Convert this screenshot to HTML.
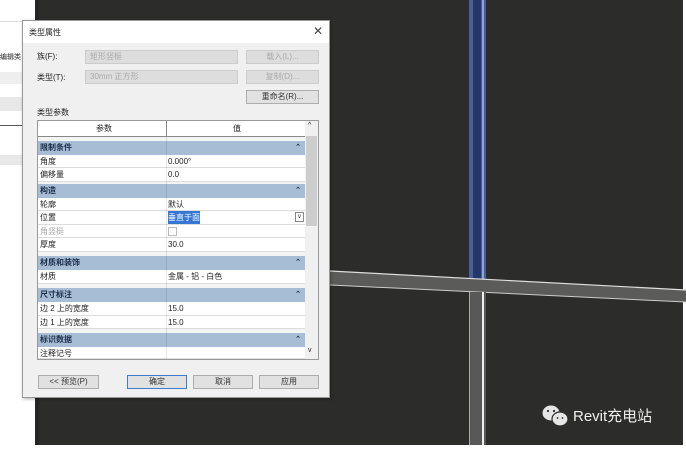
<!DOCTYPE html>
<html><head><meta charset="utf-8"><style>
*{margin:0;padding:0;box-sizing:border-box}
body{width:686px;height:449px;overflow:hidden;background:#fff;position:relative;font-family:"Liberation Sans","Noto Sans CJK SC",sans-serif;font-size:8px;color:#222}
.a{position:absolute}
.row{position:absolute;left:38px;width:267px;height:13.5px;background:#fff;border-bottom:1px solid #ddd;line-height:13px}
.row span{position:absolute;left:2px}
.row b{position:absolute;left:130px;font-weight:normal}
.sec{position:absolute;left:38px;width:267px;height:13.5px;background:#a7bdd6;line-height:13px;font-weight:bold;color:#1b2d4a}
.sec span{position:absolute;left:2px}
.sec i{position:absolute;right:4px;font-style:normal;font-size:7px}
.btn{position:absolute;height:14px;background:#e1e1e1;border:1px solid #adadad;text-align:center;line-height:12px;color:#333}
</style></head><body>
<div class="a" style="left:35px;top:0;width:648px;height:445px;background:#2c2d2b"></div>
<div class="a" style="left:35px;top:0;width:4px;height:445px;background:#252525"></div>
<div class="a" style="left:469px;top:0;width:17px;height:282px;background:#4a5f95"></div>
<div class="a" style="left:473px;top:0;width:8px;height:282px;background:#24376a"></div>
<div class="a" style="left:482px;top:0;width:2px;height:282px;background:#8ea5d8"></div>
<svg class="a" style="left:330px;top:260px" width="356" height="50">
<polygon points="0,11 356,30 356,42 0,25" fill="#5b5c5a"/>
<line x1="0" y1="11" x2="356" y2="30" stroke="#ddd" stroke-width="1.2"/>
<line x1="0" y1="25" x2="356" y2="42" stroke="#ccc" stroke-width="1"/>
</svg>
<div class="a" style="left:469px;top:292px;width:17px;height:153px;background:#575857;border-left:1px solid #aaa"></div>
<div class="a" style="left:482px;top:292px;width:2px;height:153px;background:#eee"></div>
<svg class="a" style="left:541px;top:404px" width="30" height="24">
<ellipse cx="10" cy="9" rx="8.5" ry="7.5" fill="#e6e6e6"/>
<ellipse cx="19" cy="15" rx="8" ry="7" fill="#e6e6e6" stroke="#2c2d2b" stroke-width="1.2"/>
<circle cx="7" cy="7" r="1.1" fill="#2c2d2b"/><circle cx="13" cy="7" r="1.1" fill="#2c2d2b"/>
<circle cx="16.5" cy="14" r="0.9" fill="#2c2d2b"/><circle cx="21.5" cy="14" r="0.9" fill="#2c2d2b"/>
</svg>
<div class="a" style="left:573px;top:405px;color:#eee;font-size:15px">Revit充电站</div>
<div class="a" style="left:0;top:0;width:35px;height:449px;background:#fff"></div>
<div class="a" style="left:0;top:0;width:35px;height:22px;border-bottom:1px solid #ddd"></div>
<div class="a" style="left:0;top:52px;font-size:7px">编辑类</div>
<div class="a" style="left:0;top:72px;width:35px;height:12px;background:#eee"></div>
<div class="a" style="left:0;top:97px;width:35px;height:14px;background:#e8e8e8"></div>
<div class="a" style="left:0;top:125px;width:35px;height:1px;background:#555"></div>
<div class="a" style="left:0;top:155px;width:35px;height:10px;background:#e8e8e8"></div>
<div class="a" style="left:22px;top:20px;width:308px;height:378px;background:#f0f0f0;border:1px solid #999;box-shadow:1px 1px 3px rgba(0,0,0,.3)"></div>
<div class="a" style="left:23px;top:21px;width:306px;height:22px;background:#fff"></div>
<div class="a" style="left:29px;top:27px">类型属性</div>
<div class="a" style="left:313px;top:24px;font-size:12px;color:#444">✕</div>
<div class="a" style="left:37px;top:51px">族(F):</div>
<div class="a" style="left:37px;top:72px">类型(T):</div>
<div class="a" style="left:85px;top:50px;width:153px;height:14px;background:#ddd;border:1px solid #ccc;color:#aaa;padding-left:4px;line-height:12px">矩形竖梃</div>
<div class="a" style="left:85px;top:70px;width:153px;height:14px;background:#ddd;border:1px solid #ccc;color:#aaa;padding-left:4px;line-height:12px">30mm 正方形</div>
<div class="btn" style="left:246px;top:50px;width:73px;color:#aaa;background:#ddd;border-color:#ccc">载入(L)...</div>
<div class="btn" style="left:246px;top:70px;width:73px;color:#aaa;background:#ddd;border-color:#ccc">复制(D)...</div>
<div class="btn" style="left:246px;top:90px;width:73px">重命名(R)...</div>
<div class="a" style="left:37px;top:107px">类型参数</div>
<div class="a" style="left:37px;top:120px;width:282px;height:240px;background:#f4f4f4;border:1px solid #999"></div>
<div class="a" style="left:38px;top:121px;width:267px;height:16px;background:#fff;border-bottom:1px solid #888;line-height:15px">
<span class="a" style="left:58px">参数</span><span class="a" style="left:128px;top:0;width:1px;height:15px;background:#888"></span><span class="a" style="left:195px">值</span></div>
<div class="a" style="left:305px;top:121px;width:13px;height:238px;background:#f0f0f0"></div>
<div class="a" style="left:306px;top:136px;width:11px;height:90px;background:#cdcdcd"></div>
<div class="a" style="left:308px;top:122px;font-size:7px">^</div>
<div class="a" style="left:308px;top:347px;font-size:7px">v</div>
<div class="sec" style="top:141px"><span>限制条件</span><i>⌃</i></div>
<div class="row" style="top:154.5px"><span>角度</span><b>0.000°</b></div>
<div class="row" style="top:168px"><span>偏移量</span><b>0.0</b></div>
<div class="sec" style="top:184px"><span>构造</span><i>⌃</i></div>
<div class="row" style="top:197.5px"><span>轮廓</span><b>默认</b></div>
<div class="row" style="top:211px"><span>位置</span><b style="background:#3476d2;color:#fff">垂直于面</b><i class="a" style="left:257px;top:1px;width:9px;height:10px;border:1px solid #888;font-size:6px;font-style:normal;line-height:8px;text-align:center">v</i></div>
<div class="row" style="top:224.5px;color:#aaa"><span>角竖梃</span><b style="top:2px;width:9px;height:9px;border:1px solid #bbb"></b></div>
<div class="row" style="top:238px"><span>厚度</span><b>30.0</b></div>
<div class="sec" style="top:256px"><span>材质和装饰</span><i>⌃</i></div>
<div class="row" style="top:270px"><span>材质</span><b>金属 - 铝 - 白色</b></div>
<div class="sec" style="top:288px"><span>尺寸标注</span><i>⌃</i></div>
<div class="row" style="top:302px"><span>边 2 上的宽度</span><b>15.0</b></div>
<div class="row" style="top:315.5px"><span>边 1 上的宽度</span><b>15.0</b></div>
<div class="sec" style="top:333px"><span>标识数据</span><i>⌃</i></div>
<div class="row" style="top:346.5px;height:12px"><span>注释记号</span></div>
<div class="a" style="left:166px;top:137px;width:1px;height:222px;background:rgba(0,0,0,.1)"></div>
<div class="btn" style="left:38px;top:375px;width:61px">&lt;&lt; 预览(P)</div>
<div class="btn" style="left:127px;top:375px;width:60px;border:1px solid #3c7fd1">确定</div>
<div class="btn" style="left:193px;top:375px;width:60px">取消</div>
<div class="btn" style="left:259px;top:375px;width:60px">应用</div>
</body></html>
